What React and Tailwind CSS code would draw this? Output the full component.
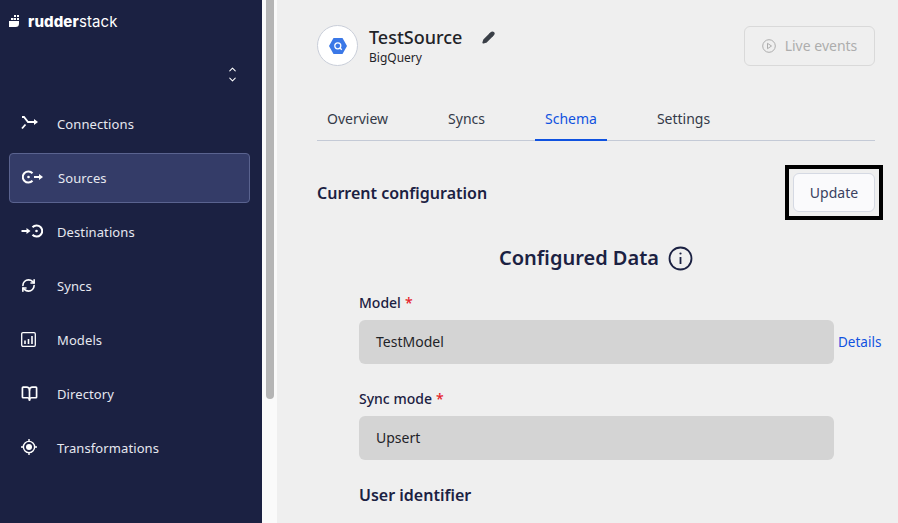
import React from 'react';
import { Pencil, ChevronUp, ChevronDown, RefreshCw, BookOpen } from 'lucide-react';

const ConnectionsIcon = () => (
  <svg width="18" height="14" viewBox="0 0 18 14" fill="none" stroke="currentColor" strokeWidth="1.8">
    <path d="M1 1l2 0 4 5h8" />
    <path d="M1 12.5l3.5-4" />
    <path d="M13 3l4 3-4 3z" fill="currentColor" stroke="none" />
  </svg>
);

const SourcesIcon = () => (
  <svg width="22" height="14" viewBox="0 0 22 14" fill="none" stroke="currentColor" strokeWidth="2">
    <path d="M10.5 3.2a5.6 5.6 0 1 0 0 7.6" />
    <circle cx="6.5" cy="7" r="1.3" fill="currentColor" stroke="none" />
    <path d="M12 7h6" />
    <path d="M17 4l4 3-4 3z" fill="currentColor" stroke="none" />
  </svg>
);

const DestinationsIcon = () => (
  <svg width="22" height="14" viewBox="0 0 22 14" fill="none" stroke="currentColor" strokeWidth="2">
    <path d="M0.5 7h6" />
    <path d="M5.5 4l4 3-4 3z" fill="currentColor" stroke="none" />
    <path d="M11.5 3.2a5.6 5.6 0 1 1 0 7.6" />
    <circle cx="15.5" cy="7" r="1.3" fill="currentColor" stroke="none" />
  </svg>
);

const ModelsIcon = () => (
  <svg width="15" height="15" viewBox="0 0 15 15" fill="none" stroke="currentColor">
    <rect x="0.7" y="0.7" width="13.6" height="13.6" rx="1.2" strokeWidth="1.3" />
    <path d="M4 8.5v3.5M7.5 7v5M11 4v8" strokeWidth="1.6" />
  </svg>
);

const TransformationsIcon = () => (
  <svg width="16" height="16" viewBox="0 0 16 16" fill="none" stroke="currentColor" strokeWidth="1.4">
    <circle cx="8" cy="8" r="5.6" />
    <circle cx="8" cy="8" r="3" fill="currentColor" stroke="none" />
    <path d="M8 0v2.4M8 13.6V16M0 8h2.4M13.6 8H16" />
  </svg>
);

const navItems = [
  { label: 'Connections', icon: <ConnectionsIcon /> },
  { label: 'Sources', icon: <SourcesIcon />, active: true },
  { label: 'Destinations', icon: <DestinationsIcon /> },
  { label: 'Syncs', icon: <RefreshCw size={15} strokeWidth={2.6} /> },
  { label: 'Models', icon: <ModelsIcon /> },
  { label: 'Directory', icon: <BookOpen size={17} strokeWidth={2.4} /> },
  { label: 'Transformations', icon: <TransformationsIcon /> },
];

const tabs = ['Overview', 'Syncs', 'Schema', 'Settings'];

const Field = ({ label, value, details }) => (
  <div>
    <div className="h-[17px] flex items-center text-sm font-medium leading-none text-[#1b2142]">
      {label} <span className="ml-1 text-[#e5232b]">*</span>
    </div>
    <div className="mt-[9px] flex items-center">
      <div className="w-[475px] h-[44px] shrink-0 flex items-center pl-[17px] rounded-md bg-[#d4d4d4] text-sm text-[#1f2328]">
        {value}
      </div>
      {details && <a className="ml-1 text-[13.5px] text-[#0f52e0]">Details</a>}
    </div>
  </div>
);

export default function App() {
  return (
    <div className="flex h-screen overflow-hidden bg-[#efefef] font-['Noto_Sans',sans-serif]">
      {/* Sidebar */}
      <aside className="w-[262px] shrink-0 bg-[#1b2142] text-[#e6e8f0]">
        <div className="flex items-center gap-[9px] pl-[9px] pt-[10px] h-[32px] text-white">
          <svg width="10" height="12" viewBox="0 0 10 12" fill="currentColor">
            <path d="M5 0h2v2H5zM8 0h2v2H8zM2 3h2.5v2H2zM5 3h2v2H5zM8 3h2v2H8zM0 6h10v2.5a3.5 3.5 0 0 1-3.5 3.5H0z" />
          </svg>
          <span className="font-['Inter',sans-serif] text-[15px] leading-none tracking-[0.1px]">
            <span className="font-extrabold">rudder</span>stack
          </span>
        </div>
        <div className="flex flex-col items-end pr-[24px] mt-[32px] text-white">
          <ChevronUp size={11} strokeWidth={2.2} className="-mb-[1px]" />
          <ChevronDown size={11} strokeWidth={2.2} />
        </div>
        <nav className="mt-[14px] ml-[9px] mr-[12px] flex flex-col gap-[4px]">
          {navItems.map((item) => (
            <div
              key={item.label}
              className={`flex items-center h-[50px] pt-[2px] rounded text-[13px] tracking-[0.1px] border ${
                item.active ? 'bg-[#343c68] border-[#5a638f] pl-[1px]' : 'border-transparent'
              }`}
            >
              <span className="w-[47px] pl-[11px] shrink-0 flex items-center -mt-[4px] text-white">{item.icon}</span>
              <span>{item.label}</span>
            </div>
          ))}
        </nav>
      </aside>

      {/* Scrollbar */}
      <div className="w-[15px] shrink-0 bg-[#fafafa] pl-[4px]">
        <div className="w-[8px] h-[399px] rounded-b bg-[#b5b5b5]" />
      </div>

      {/* Content */}
      <main className="flex-1 min-w-0 pl-[40px] pr-[23px] pt-[24px]">
        <div className="flex justify-between">
          <div className="flex items-start">
            <div className="mt-[1px] w-[41px] h-[41px] rounded-full bg-white border border-[#c9ced9] flex items-center justify-center">
              <svg width="18" height="16" viewBox="0 0 18 16">
                <path d="M4.5 0h9L18 8l-4.500 8h-9L0 8z" fill="#3b78e7" />
                <circle cx="8.800" cy="7.800" r="3" fill="none" stroke="#fff" strokeWidth="1.300" />
                <path d="M10.800 9.800l2 2" stroke="#fff" strokeWidth="1.300" />
              </svg>
            </div>
            <div className="ml-[11px]">
              <div className="flex items-center h-[26px]">
                <span className="text-lg font-medium leading-none text-[#1f2328]">TestSource</span>
                <Pencil size={13} strokeWidth={2.5} fill="currentColor" className="ml-[20px] text-[#3a3f47]" />
              </div>
              <div className="text-xs leading-[16px] text-[#1f2328]">BigQuery</div>
            </div>
          </div>
          <button className="mt-[2px] w-[131px] h-[40px] flex items-center justify-center gap-[9px] rounded-md border border-[#d9d9d9] text-sm text-[#adadad]">
            <svg width="14" height="14" viewBox="0 0 14 14" fill="none" stroke="currentColor" strokeWidth="1">
              <circle cx="7" cy="7" r="6.300" />
              <path d="M5.500 4.300l4 2.700-4 2.700z" />
            </svg>
            Live events
          </button>
        </div>

        <div className="mt-[33px] flex gap-[40px] border-b border-[#c4cad6] h-[42px]">
          {tabs.map((tab) => (
            <div
              key={tab}
              className={`h-[42px] px-[10px] flex items-center text-sm border-b-2 ${
                tab === 'Schema' ? 'text-[#0f52e0] border-[#0f52e0]' : 'text-[#343a48] border-transparent'
              }`}
            >
              {tab}
            </div>
          ))}
        </div>

        <div className="mt-[32px] flex items-center justify-between">
          <h2 className="mt-[1px] text-base font-semibold leading-none text-[#1b2142]">Current configuration</h2>
          {/* black frame drawn round the button */}
          <div className="-m-2 p-1 border-4 border-black">
            <button className="block w-[82px] h-[39px] rounded-md bg-[#fafafc] border border-[#d5d9e3] text-sm text-[#3b4160]">
              Update
            </button>
          </div>
        </div>

        <div className="mt-[32px] flex items-center justify-center gap-[9px] h-[28px]">
          <h2 className="text-xl font-semibold leading-none text-[#1b2142]">Configured Data</h2>
          <svg width="25" height="25" viewBox="0 0 25 25" fill="none" stroke="#1b2142" strokeWidth="1.800">
            <circle cx="12.500" cy="12.500" r="11" />
            <path d="M12.500 11v7" />
            <circle cx="12.500" cy="7.500" r="1.100" fill="#1b2142" stroke="none" />
          </svg>
        </div>

        <div className="mt-[22px] pl-[42px] flex flex-col gap-[26px]">
          <Field label="Model" value="TestModel" details />
          <Field label="Sync mode" value="Upsert" />
        </div>
        <h3 className="mt-[27px] pl-[42px] text-base font-semibold leading-none text-[#1b2142]">User identifier</h3>
      </main>
    </div>
  );
}
